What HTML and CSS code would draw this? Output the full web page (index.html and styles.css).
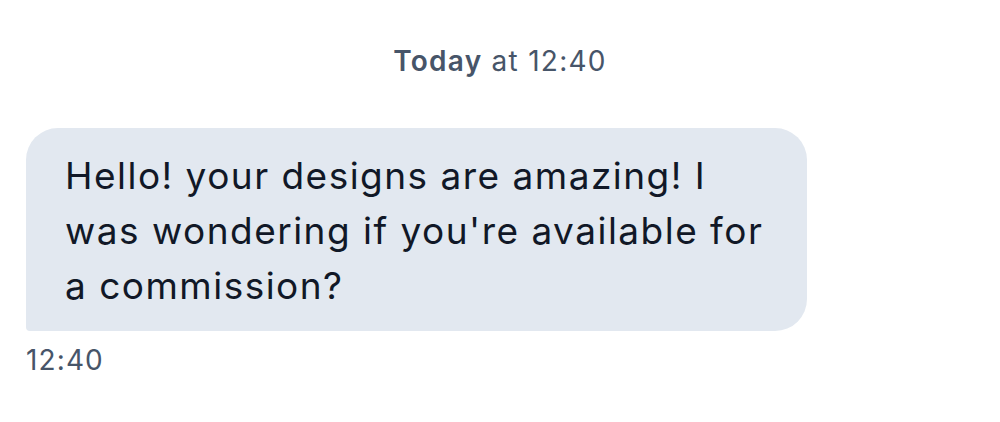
FILE: index.html
```html
<!DOCTYPE html>
<html>
<head>
<meta charset="utf-8">
<link rel="stylesheet" href="styles.css">
</head>
<body>
<div class="chat">
  <div class="day"><strong>Today</strong> at 12:40</div>
  <div class="msg">
    <div class="bubble">Hello! your designs are amazing! I was wondering if you're available for a commission?</div>
    <div class="time">12:40</div>
  </div>
</div>
</body>
</html>
```
FILE: styles.css
```css
html, body {
  margin: 0;
  padding: 0;
  background: #ffffff;
}
body {
  font-family: Inter, "Noto Sans", sans-serif;
}
.chat {
  display: flex;
  flex-direction: column;
  padding: 42px 26px 0 26px;
}
.day {
  text-align: center;
  font-size: 28px;
  line-height: 38px;
  letter-spacing: 0.045em;
  color: #475569;
}
.day strong {
  font-weight: 600;
}
.msg {
  margin-top: 48px;
  display: flex;
  flex-direction: column;
  align-items: flex-start;
}
.bubble {
  box-sizing: border-box;
  width: 781px;
  background: #e2e8f0;
  color: #111827;
  font-size: 37px;
  line-height: 55px;
  letter-spacing: 0.04em;
  padding: 20px 39px 18px 39px;
  border-radius: 32px 32px 32px 4px;
}
.time {
  margin-top: 10px;
  font-size: 28px;
  line-height: 38px;
  letter-spacing: 0.04em;
  color: #475569;
}
```
